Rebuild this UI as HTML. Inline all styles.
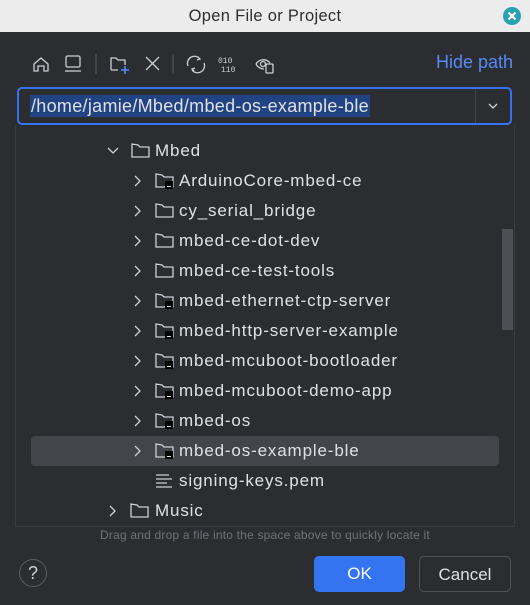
<!DOCTYPE html>
<html><head><meta charset="utf-8"><style>
*{margin:0;padding:0;box-sizing:border-box}
body{width:530px;height:605px;background:#2b2d30;font-family:"Liberation Sans","DejaVu Sans",sans-serif;position:relative;overflow:hidden;color:#dfe1e5}
.title{position:absolute;left:0;top:0;width:530px;height:32px;background:#ececec;color:#2e2e2e;font-size:16.5px;letter-spacing:0.3px;text-align:center;line-height:32px}
.close{position:absolute;right:9px;top:7px;width:18px;height:18px;border-radius:50%;background:#2aa1b3}
.ab{position:absolute}
.path{position:absolute;left:17px;top:87px;width:495px;height:38px;border:2px solid #3574f0;border-radius:5px;background:#2b2d30}
.sel{position:absolute;left:11px;top:6px;background:#214283;color:#dfe1e5;font-size:18px;letter-spacing:0.3px;line-height:22px;padding:0 1px}
.tree{position:absolute;left:15px;top:125px;width:500px;height:402px;border:1px solid #393b40;border-top:none}
.row{position:absolute;height:30px;font-size:17px;letter-spacing:0.85px;line-height:30px;color:#dfe1e5;white-space:nowrap}
.selrow{position:absolute;left:31px;top:436px;width:468px;height:30px;background:#43454a;border-radius:4px}
.btn{position:absolute;top:556px;height:36px;border-radius:5px;font-size:17px;text-align:center;line-height:36px}
</style></head><body>
<div class="title">Open File or Project</div>
<svg class="close" style="position:absolute" width="18" height="18" viewBox="0 0 18 18"><path d="M5.5 5.5l7 7M12.5 5.5l-7 7" stroke="#fff" stroke-width="2.2"/></svg>

<svg class="ab" style="left:30px;top:52px" width="250" height="24" viewBox="0 0 250 24" fill="none" stroke="#ced0d6" stroke-width="1.3">
<path d="M4 19v-7l7-6 7 6v7h-4v-5h-6v5z"/>
<rect x="36" y="4" width="14" height="11" rx="1.5"/><path d="M35 19h16"/>
<path d="M66 2v20" stroke="#4e5157"/>
<path d="M81 18v-12h5l2 2h7v5M81 18h7"/><path d="M95 14v8M91 18h8" stroke="#548af7" stroke-width="1.6"/>
<path d="M116 5l13 13M129 5l-13 13"/>
<path d="M143 2v20" stroke="#4e5157"/>
<path d="M158 14a7 7 0 0 1 12-7M174 11a7 7 0 0 1-12 7M168 5l2 2-3 1M164 19l-2-2 3-1"/>
<text x="188" y="11" font-size="8" fill="#ced0d6" stroke="none" font-family="Liberation Mono">010</text>
<text x="191" y="20" font-size="8" fill="#ced0d6" stroke="none" font-family="Liberation Mono">110</text>
<path d="M226 12c3-5 10-6 14-1M226 12c2 4 6 5 8 5"/><circle cx="233" cy="12" r="2.5"/><rect x="236" y="12" width="7" height="9" rx="1"/>
</svg>
<div class="ab" style="left:436px;top:52px;font-size:18px;color:#548af7">Hide path</div>

<div class="path"><span class="sel">/home/jamie/Mbed/mbed-os-example-ble</span>
<div class="ab" style="left:456px;top:0;width:1px;height:34px;background:#43454a"></div>
<svg class="ab" style="left:468px;top:12px" width="12" height="10"><path d="M2 3l4 4 4-4" stroke="#ced0d6" stroke-width="1.3" fill="none"/></svg>
</div>

<div class="tree"></div>
<div class="ab" style="left:502px;top:229px;width:11px;height:101px;background:#4d4f54"></div>
<div class="selrow"></div>

<svg class="ab" style="left:0;top:0" width="530" height="530" fill="none" stroke="#ced0d6" stroke-width="1.3">
<path d="M108 148l5 5 5-5"/>
<path d="M132 144v13h17v-10h-9l-2-2z"/>
<path d="M135 176l5 5-5 5"/>
<path d="M135 206l5 5-5 5"/><path d="M135 236l5 5-5 5"/><path d="M135 266l5 5-5 5"/><path d="M135 296l5 5-5 5"/><path d="M135 326l5 5-5 5"/><path d="M135 356l5 5-5 5"/><path d="M135 386l5 5-5 5"/><path d="M135 416l5 5-5 5"/><path d="M135 446l5 5-5 5"/>
<path d="M110 506l5 5-5 5"/>
<path d="M156 174v13h17v-10h-9l-2-2z"/><path d="M156 204v13h17v-10h-9l-2-2z"/><path d="M156 234v13h17v-10h-9l-2-2z"/><path d="M156 264v13h17v-10h-9l-2-2z"/><path d="M156 294v13h17v-10h-9l-2-2z"/><path d="M156 324v13h17v-10h-9l-2-2z"/><path d="M156 354v13h17v-10h-9l-2-2z"/><path d="M156 384v13h17v-10h-9l-2-2z"/><path d="M156 414v13h17v-10h-9l-2-2z"/><path d="M156 444v13h17v-10h-9l-2-2z"/>
<path d="M131 504v13h17v-10h-9l-2-2z"/>
<path d="M156 475h13M156 479h16M156 483h11M156 487h16"/>
</svg>
<svg class="ab" style="left:0;top:0" width="530" height="530">
<g fill="#000"><rect x="165" y="181" width="8" height="8"/><rect x="165" y="301" width="8" height="8"/><rect x="165" y="331" width="8" height="8"/><rect x="165" y="361" width="8" height="8"/><rect x="165" y="391" width="8" height="8"/><rect x="165" y="421" width="8" height="8"/><rect x="165" y="451" width="8" height="8"/></g>
<g fill="#ddd"><rect x="167" y="186" width="4" height="1"/><rect x="167" y="306" width="4" height="1"/><rect x="167" y="336" width="4" height="1"/><rect x="167" y="366" width="4" height="1"/><rect x="167" y="396" width="4" height="1"/><rect x="167" y="426" width="4" height="1"/><rect x="167" y="456" width="4" height="1"/></g>
</svg>

<div class="row" style="left:155px;top:136px">Mbed</div>
<div class="row" style="left:179px;top:166px">ArduinoCore-mbed-ce</div>
<div class="row" style="left:179px;top:196px">cy_serial_bridge</div>
<div class="row" style="left:179px;top:226px">mbed-ce-dot-dev</div>
<div class="row" style="left:179px;top:256px">mbed-ce-test-tools</div>
<div class="row" style="left:179px;top:286px">mbed-ethernet-ctp-server</div>
<div class="row" style="left:179px;top:316px">mbed-http-server-example</div>
<div class="row" style="left:179px;top:346px">mbed-mcuboot-bootloader</div>
<div class="row" style="left:179px;top:376px">mbed-mcuboot-demo-app</div>
<div class="row" style="left:179px;top:406px">mbed-os</div>
<div class="row" style="left:179px;top:436px">mbed-os-example-ble</div>
<div class="row" style="left:179px;top:466px">signing-keys.pem</div>
<div class="row" style="left:155px;top:496px">Music</div>

<div class="ab" style="left:0;width:530px;top:528px;text-align:center;font-size:12px;letter-spacing:0.2px;color:#6f737a">Drag and drop a file into the space above to quickly locate it</div>

<div class="ab" style="left:19px;top:559px;width:28px;height:28px;border:1px solid #5a5d63;border-radius:50%;text-align:center;line-height:26px;font-size:18px;color:#ced0d6">?</div>
<div class="btn" style="left:314px;width:91px;background:#3574f0;color:#fff">OK</div>
<div class="btn" style="left:419px;width:92px;border:1px solid #4e5157;color:#dfe1e5">Cancel</div>
</body></html>
